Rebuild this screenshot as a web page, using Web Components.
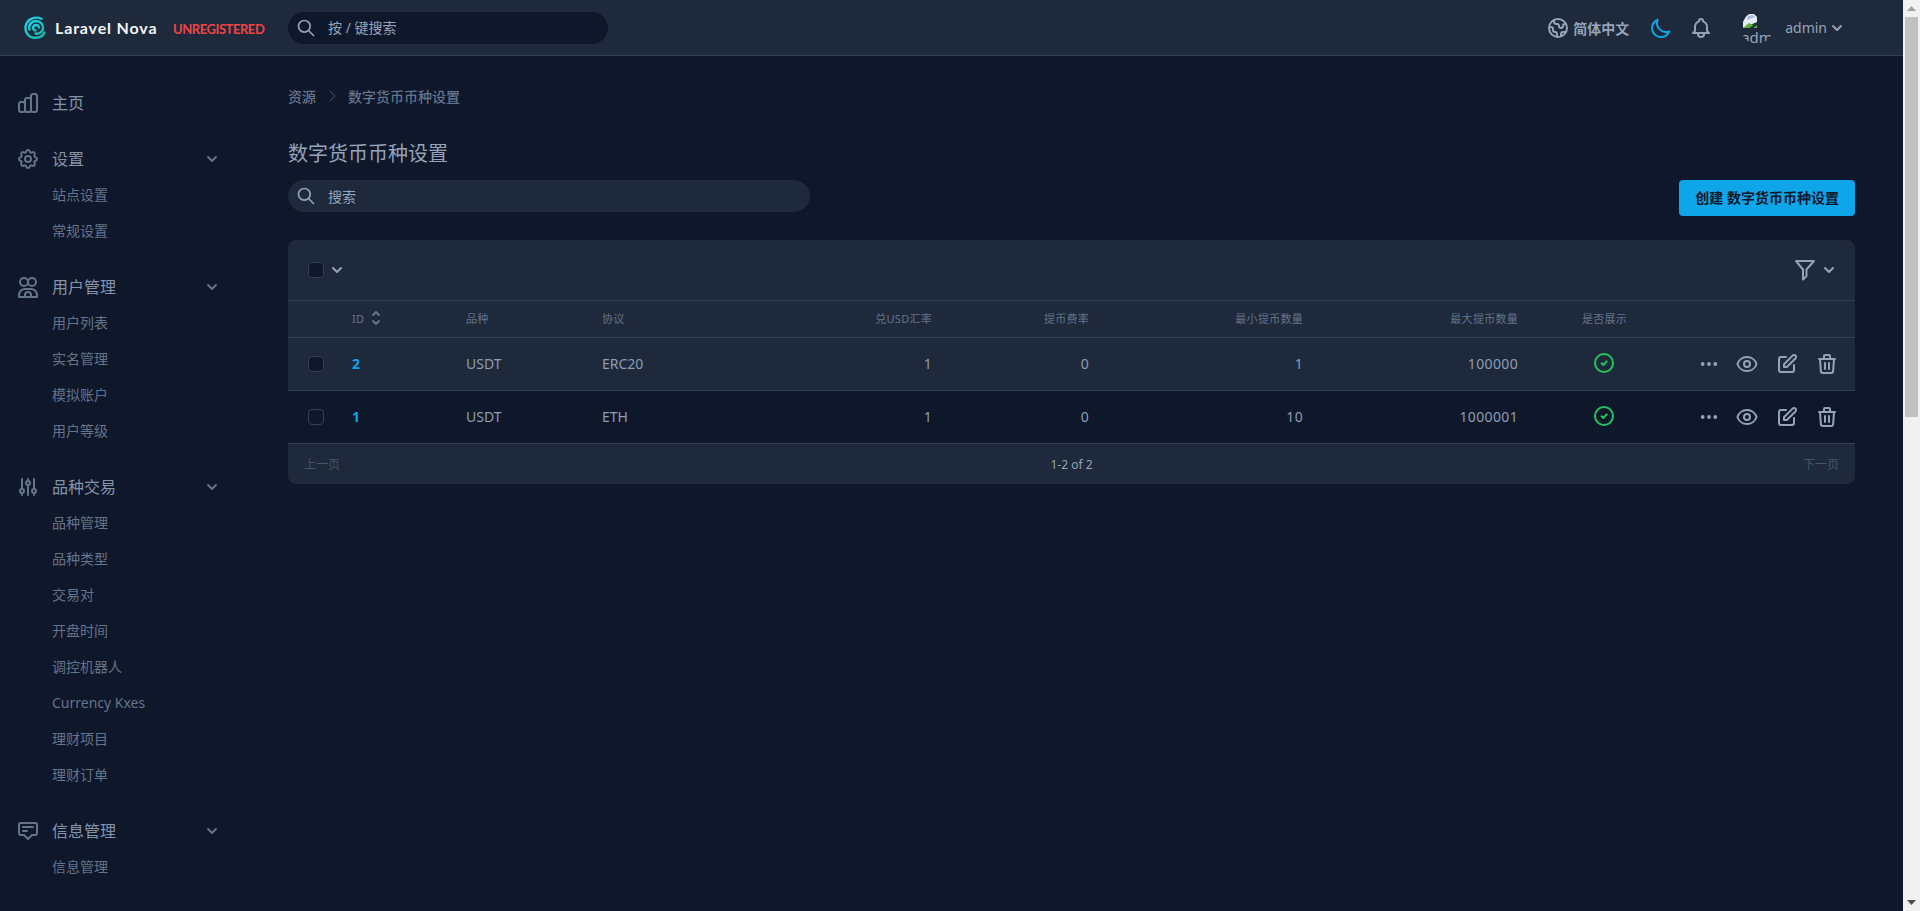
<!DOCTYPE html>
<html lang="zh-CN">
<head>
<meta charset="utf-8">
<title>数字货币币种设置</title>
<style>
  html, body { margin: 0; height: 911px; overflow: hidden; background: #0f172a; }
  body { font-family: "Noto Sans", "Noto Sans CJK SC", sans-serif; font-size: 14px; color: #94a3b8; }
</style>
</head>
<body>
<nova-app>
  <nova-header slot="header"></nova-header>
  <nova-sidebar slot="sidebar">
    <nav-group icon="chart" label="主页"></nav-group>
    <nav-group icon="cog" label="设置" open>
      <nav-item>站点设置</nav-item>
      <nav-item>常规设置</nav-item>
    </nav-group>
    <nav-group icon="users" label="用户管理" open>
      <nav-item>用户列表</nav-item>
      <nav-item>实名管理</nav-item>
      <nav-item>模拟账户</nav-item>
      <nav-item>用户等级</nav-item>
    </nav-group>
    <nav-group icon="sliders" label="品种交易" open>
      <nav-item>品种管理</nav-item>
      <nav-item>品种类型</nav-item>
      <nav-item>交易对</nav-item>
      <nav-item>开盘时间</nav-item>
      <nav-item>调控机器人</nav-item>
      <nav-item>Currency Kxes</nav-item>
      <nav-item>理财项目</nav-item>
      <nav-item>理财订单</nav-item>
    </nav-group>
    <nav-group icon="chat" label="信息管理" open>
      <nav-item>信息管理</nav-item>
    </nav-group>
  </nova-sidebar>
  <resource-page slot="main" crumb="资源" title-text="数字货币币种设置">
    <resource-table>
      <table-row kind="head">
        <row-cell></row-cell>
        <row-cell sort>ID</row-cell>
        <row-cell>品种</row-cell>
        <row-cell>协议</row-cell>
        <row-cell align="right">兑USD汇率</row-cell>
        <row-cell align="right">提币费率</row-cell>
        <row-cell align="right">最小提币数量</row-cell>
        <row-cell align="right">最大提币数量</row-cell>
        <row-cell align="center">是否展示</row-cell>
        <row-cell></row-cell>
      </table-row>
      <table-row kind="lit">
        <row-cell><row-check></row-check></row-cell>
        <row-cell link>2</row-cell>
        <row-cell>USDT</row-cell>
        <row-cell>ERC20</row-cell>
        <row-cell align="right" num>1</row-cell>
        <row-cell align="right" num>0</row-cell>
        <row-cell align="right" num>1</row-cell>
        <row-cell align="right" num>100000</row-cell>
        <row-cell align="center"><status-ok></status-ok></row-cell>
        <row-cell align="right"><row-actions></row-actions></row-cell>
      </table-row>
      <table-row>
        <row-cell><row-check></row-check></row-cell>
        <row-cell link>1</row-cell>
        <row-cell>USDT</row-cell>
        <row-cell>ETH</row-cell>
        <row-cell align="right" num>1</row-cell>
        <row-cell align="right" num>0</row-cell>
        <row-cell align="right" num>10</row-cell>
        <row-cell align="right" num>1000001</row-cell>
        <row-cell align="center"><status-ok></status-ok></row-cell>
        <row-cell align="right"><row-actions></row-actions></row-cell>
      </table-row>
    </resource-table>
  </resource-page>
  <fake-scrollbar slot="scroll"></fake-scrollbar>
</nova-app>

<script>
/* icon paths, 24 box unless said otherwise */
const ICONS = {
  chart: 'M9 19v-6a2 2 0 00-2-2H5a2 2 0 00-2 2v6a2 2 0 002 2h2a2 2 0 002-2zm0 0V9a2 2 0 012-2h2a2 2 0 012 2v10m-6 0a2 2 0 002 2h2a2 2 0 002-2m0 0V5a2 2 0 012-2h2a2 2 0 012 2v14a2 2 0 01-2 2h-2a2 2 0 01-2-2z',
  cog: 'M10.325 4.317c.426-1.756 2.924-1.756 3.35 0a1.724 1.724 0 002.573 1.066c1.543-.94 3.31.826 2.37 2.37a1.724 1.724 0 001.065 2.572c1.756.426 1.756 2.924 0 3.35a1.724 1.724 0 00-1.066 2.573c.94 1.543-.826 3.31-2.37 2.37a1.724 1.724 0 00-2.572 1.065c-.426 1.756-2.924 1.756-3.35 0a1.724 1.724 0 00-2.573-1.066c-1.543.94-3.31-.826-2.37-2.37a1.724 1.724 0 00-1.065-2.572c-1.756-.426-1.756-2.924 0-3.35a1.724 1.724 0 001.066-2.573c-.94-1.543.826-3.31 2.37-2.37.996.608 2.296.07 2.572-1.065zM15 12a3 3 0 11-6 0 3 3 0 016 0z',
  users: 'M12 7a4 4 0 11-8 0 4 4 0 018 0zM20 7a4 4 0 01-8 0 4 4 0 018 0zM3 22v-2a6 6 0 016-6h6a6 6 0 016 6v2zM9 22v-2a3 3 0 016 0v2',
  sliders: 'M12 6V4m0 2a2 2 0 100 4m0-4a2 2 0 110 4m-6 8a2 2 0 100-4m0 4a2 2 0 110-4m0 4v2m0-6V4m6 6v10m6-2a2 2 0 100-4m0 4a2 2 0 110-4m0 4v2m0-6V4',
  chat: 'M7 8h10M7 12h4m1 8l-4-4H5a2 2 0 01-2-2V6a2 2 0 012-2h14a2 2 0 012 2v8a2 2 0 01-2 2h-3l-4 4z',
  search: 'M21 21l-6-6m2-5a7 7 0 11-14 0 7 7 0 0114 0z',
  globe: 'M3.055 11H5a2 2 0 012 2v1a2 2 0 002 2 2 2 0 012 2v2.945M8 3.935V5.5A2.5 2.5 0 0010.5 8h.5a2 2 0 012 2 2 2 0 104 0 2 2 0 012-2h1.064M15 20.488V18a2 2 0 012-2h3.064M21 12a9 9 0 11-18 0 9 9 0 0118 0z',
  moon: 'M20.354 15.354A9 9 0 018.646 3.646 9.003 9.003 0 0012 21a9.003 9.003 0 008.354-5.646z',
  bell: 'M15 17h5l-1.405-1.405A2.032 2.032 0 0118 14.158V11a6.002 6.002 0 00-4-5.659V5a2 2 0 10-4 0v.341C7.67 6.165 6 8.388 6 11v3.159c0 .538-.214 1.055-.595 1.436L4 17h5m6 0v1a3 3 0 11-6 0v-1m6 0H9',
  filter: 'M3 3h18l-7.500 8.500V18l-3.500 3.500v-10z',
  eye: 'M15 12a3 3 0 11-6 0 3 3 0 016 0zM2.458 12C3.732 7.943 7.523 5 12 5c4.478 0 8.268 2.943 9.542 7-1.274 4.057-5.064 7-9.542 7-4.477 0-8.268-2.943-9.542-7z',
  edit: 'M11 5H6a2 2 0 00-2 2v11a2 2 0 002 2h11a2 2 0 002-2v-5m-1.414-9.414a2 2 0 112.828 2.828L11.828 15H9v-2.828l8.586-8.586z',
  trash: 'M19 7l-.867 12.142A2 2 0 0116.138 21H7.862a2 2 0 01-1.995-1.858L5 7m5 4v6m4-6v6m1-10V4a1 1 0 00-1-1h-4a1 1 0 00-1 1v3M4 7h16'
};
const CHEVRON = 'M5.293 7.293a1 1 0 011.414 0L10 10.586l3.293-3.293a1 1 0 111.414 1.414l-4 4a1 1 0 01-1.414 0l-4-4a1 1 0 010-1.414z';

function icon(name, size = 24) {
  return `<svg width="${size}" height="${size}" viewBox="0 0 24 24" fill="none" stroke="currentColor" stroke-width="2" stroke-linecap="round" stroke-linejoin="round"><path d="${ICONS[name]}"/></svg>`;
}
function chevron(size = 20) {
  return `<svg width="${size}" height="${size}" viewBox="0 0 20 20" fill="currentColor"><path fill-rule="evenodd" clip-rule="evenodd" d="${CHEVRON}"/></svg>`;
}

class ShadowBase extends HTMLElement {
  constructor() {
    super();
    this.attachShadow({mode: 'open'});
  }
  connectedCallback() {
    this.shadowRoot.innerHTML = this.render();
  }
}

class NovaApp extends ShadowBase {
  render() {
    return `<style>
      :host { display: flex; height: 911px; }
      .page { flex: 1; min-width: 0; display: flex; flex-direction: column; }
      .body { flex: 1; display: flex; min-height: 0; }
    </style>
    <div class="page">
      <slot name="header"></slot>
      <div class="body"><slot name="sidebar"></slot><slot name="main"></slot></div>
    </div>
    <slot name="scroll"></slot>`;
  }
}

class NovaHeader extends ShadowBase {
  render() {
    return `<style>
      :host { display: flex; align-items: center; height: 55px; background: #1e293b; border-bottom: 1px solid #334155; }
      .brand { width: 264px; margin-left: 24px; display: flex; align-items: center; flex: none; }
      .logo { display: block; margin-right: 8px; }
      .name { font: 700 16px/1 Lato, sans-serif; color: #f1f5f9; letter-spacing: .85px; width: 101px; white-space: nowrap; margin-top: 1px; }
      .reg { font: 700 13px/1 Lato, sans-serif; color: #ef4444; letter-spacing: -.45px; margin-left: 17px; margin-top: 3px; white-space: nowrap; }
      .search { width: 320px; height: 32px; border-radius: 16px; background: #0f172a; display: flex; align-items: center; padding-left: 8px; box-sizing: border-box; gap: 12px; }
      .search span { padding-bottom: 2px; }
      .right { margin-left: auto; margin-right: 56px; display: flex; align-items: center; height: 100%; }
      .lang { display: flex; align-items: center; gap: 3px; font-weight: 700; }
      svg { display: block; }
      .moon { color: #0ea5e9; margin-left: 20px; }
      .bell { margin-left: 16px; }
      .avatar { margin-left: 28px; width: 32px; height: 32px; border-radius: 50%; overflow: hidden; font-size: 15px; line-height: 16px; white-space: nowrap; }
      .avatar svg { margin: 1px 0 0 1px; }
      .user { margin-left: 12px; }
    </style>
    <div class="brand">
      <svg class="logo" width="23" height="23" viewBox="0 0 23 23" fill="none" stroke-linecap="round">
        <defs><linearGradient id="sw" x1="0" y1="0" x2="1" y2="1"><stop offset="0" stop-color="#22d3ee"/><stop offset="1" stop-color="#14b8a6"/></linearGradient></defs>
        <path stroke="url(#sw)" stroke-width="2.400" d="M17.500 2.800C11 -.2 3.500 3 1.800 9.500.2 16 5 22 11.500 21.800c4.300-.1 7.700-2 9-5.300"/>
        <path stroke="url(#sw)" stroke-width="2.400" d="M5.500 13.500C4.300 8.500 8 5 12 5c4.500 0 7.500 3.500 7 7.500-.5 3.500-4 5.800-7.500 5"/>
        <path stroke="url(#sw)" stroke-width="2.400" d="M15 11.500c-.3-1.800-1.800-2.700-3.300-2.500-1.800.2-2.900 1.900-2.500 3.500.3 1.200 1.400 2 2.500 1.900"/>
      </svg>
      <span class="name">Laravel Nova</span>
      <span class="reg">UNREGISTERED</span>
    </div>
    <div class="search">${icon('search', 20)}<span>按 / 键搜索</span></div>
    <div class="right">
      <div class="lang">${icon('globe')}<span>简体中文</span></div>
      <div class="moon">${icon('moon')}</div>
      <div class="bell">${icon('bell')}</div>
      <div class="avatar">
        <svg width="16" height="16" viewBox="0 0 16 16">
          <path fill="#e8ecf5" d="M5 1h7l3 3v5L1 15V9z"/>
          <path fill="#aab9e0" d="M6 3l5-1 2 2-8 3z"/>
          <path fill="#5fae3e" d="M1 15l6-5 4 2 4-2v5z"/>
          <path fill="#1e293b" d="M6 16l10-7v7z"/>
          <path fill="#5fae3e" d="M11 15l4-3v3z"/>
        </svg>admin
      </div>
      <span class="user">admin</span>
      <span class="chev">${chevron()}</span>
    </div>`;
  }
}

class NovaSidebar extends ShadowBase {
  render() {
    return `<style>
      :host { display: flex; flex-direction: column; width: 288px; flex: none; box-sizing: border-box; padding: 29px 0 0 16px; gap: 20px; overflow: hidden; }
    </style><slot></slot>`;
  }
}

class NavGroup extends ShadowBase {
  render() {
    const open = this.hasAttribute('open');
    return `<style>
      :host { display: block; color: #8494aa; }
      .head { display: flex; align-items: center; height: 36px; font-size: 16px; gap: 12px; width: 206px; }
      .head svg { display: block; flex: none; }
      .icon { color: #64748b; display: block; }
      .label { flex: 1; padding-bottom: 2px; }
      .chev { color: #64748b; }
    </style>
    <div class="head">
      <span class="icon">${icon(this.getAttribute('icon'))}</span>
      <span class="label">${this.getAttribute('label')}</span>
      ${open ? `<span class="chev">${chevron()}</span>` : ''}
    </div>
    <slot></slot>`;
  }
}

class NavItem extends ShadowBase {
  render() {
    return `<style>
      :host { display: flex; align-items: center; height: 36px; box-sizing: border-box; padding: 0 0 2px 36px; color: #64748b; font-size: 14px; }
    </style><slot></slot>`;
  }
}

class ResourcePage extends ShadowBase {
  render() {
    return `<style>
      :host { display: block; flex: 1; min-width: 0; padding: 31px 48px 0 0; box-sizing: border-box; }
      .crumbs { display: flex; align-items: center; height: 18px; color: #64748b; font-weight: 500; }
      .crumbs svg { margin: 0 8px; color: #475569; display: block; }
      h1 { margin: 35px 0 0; font-size: 20px; line-height: 28px; font-weight: 400; color: #94a3b8; }
      .bar { display: flex; justify-content: space-between; align-items: flex-start; margin: 12px 0 24px; }
      .search { width: 522px; height: 32px; border-radius: 16px; background: #1e293b; display: flex; align-items: center; padding-left: 8px; box-sizing: border-box; gap: 12px; }
      .search svg { display: block; }
      .create { height: 36px; box-sizing: border-box; padding: 0 16px 2px; border-radius: 4px; background: #0ea5e9; color: #0f172a; font-weight: 700; display: flex; align-items: center; }
    </style>
    <div class="crumbs"><span>${this.getAttribute('crumb')}</span>
      <svg width="16" height="16" viewBox="0 0 16 16" fill="none" stroke="currentColor" stroke-width="1"><path d="M6 3l5 5-5 5"/></svg>
      <span>${this.getAttribute('title-text')}</span></div>
    <h1>${this.getAttribute('title-text')}</h1>
    <div class="bar">
      <div class="search">${icon('search', 20)}<span>搜索</span></div>
      <div class="create">创建 ${this.getAttribute('title-text')}</div>
    </div>
    <slot></slot>`;
  }
}

class ResourceTable extends ShadowBase {
  render() {
    return `<style>
      :host { display: block; background: #1e293b; border-radius: 8px; overflow: hidden;
        --cols: 64px 114px 136px 136px 194px 157px 214px 215px 173px 1fr; }
      .tools { display: flex; align-items: center; height: 60px; padding: 0 16px 0 20px; border-bottom: 1px solid #334155; color: #94a3b8; }
      .tools svg { display: block; }
      .left { display: flex; align-items: center; gap: 3px; }
      .right { margin-left: auto; display: flex; align-items: center; }
      .right .c { margin-left: 2px; }
      .foot { display: flex; align-items: center; justify-content: space-between; height: 40px; padding: 0 16px; font-size: 12px; color: #475569; }
      .mid { color: #94a3b8; }
    </style>
    <div class="tools">
      <div class="left"><row-check></row-check>${chevron()}</div>
      <div class="right">${icon('filter')}<span class="c">${chevron()}</span></div>
    </div>
    <slot></slot>
    <div class="foot"><span>上一页</span><span class="mid">1-2 of 2</span><span>下一页</span></div>`;
  }
}

class TableRow extends ShadowBase {
  render() {
    const kind = this.getAttribute('kind');
    const bg = kind === 'lit' || kind === 'head' ? '#1e293b' : '#0f172a';
    const h = kind === 'head' ? 36 : 52;
    const extra = kind === 'head' ? 'font-size: 11px; letter-spacing: .275px; color: #64748b;' : 'color: #8c9db5;';
    return `<style>
      :host { display: grid; grid-template-columns: var(--cols); align-items: center; height: ${h}px; background: ${bg}; border-bottom: 1px solid #334155; ${extra} }
    </style><slot></slot>`;
  }
}

class RowCell extends ShadowBase {
  render() {
    const align = this.getAttribute('align') || 'left';
    const justify = {left: 'flex-start', right: 'flex-end', center: 'center'}[align];
    const link = this.hasAttribute('link');
    const sort = this.hasAttribute('sort');
    const num = this.hasAttribute('num') ? 'letter-spacing: .35px;' : '';
    return `<style>
      :host { display: flex; align-items: center; justify-content: ${justify}; ${link ? 'color: #0ea5e9; font-weight: 700;' : ''} ${num} min-width: 0; white-space: nowrap; padding-bottom: 2px; }
      svg { display: block; margin-left: 7px; color: #64748b; }
    </style><slot></slot>${sort ? `<svg width="10" height="16" viewBox="0 0 10 16" fill="none" stroke="currentColor" stroke-width="2" stroke-linecap="round" stroke-linejoin="round"><path d="M2 5l3-3 3 3M2 11l3 3 3-3"/></svg>` : ''}`;
  }
}

class RowCheck extends ShadowBase {
  render() {
    return `<style>
      :host { display: block; width: 16px; height: 16px; box-sizing: border-box; border: 1px solid #334155; border-radius: 4px; background: #0f172a; flex: none; }
      :host-context(table-row) { margin: 0 0 -2px 20px; }
    </style>`;
  }
}

class StatusOk extends ShadowBase {
  render() {
    return `<style>
      :host { display: block; color: #22c55e; margin-right: 2px; }
      svg { display: block; }
    </style>
    <svg width="24" height="24" viewBox="0 0 24 24" fill="none" stroke="currentColor" stroke-linecap="round" stroke-linejoin="round">
      <circle cx="12" cy="12" r="9" stroke-width="2"/><path d="M9.500 12.200l1.800 1.800 3.400-3.600" stroke-width="2"/>
    </svg>`;
  }
}

class RowActions extends ShadowBase {
  render() {
    return `<style>
      :host { display: flex; gap: 16px; padding-right: 16px; margin-bottom: -2px; color: #94a3b8; }
      svg { display: block; }
    </style>
    <svg width="24" height="24" viewBox="0 0 24 24" fill="currentColor"><circle cx="7.700" cy="12" r="1.900"/><circle cx="14" cy="12" r="1.900"/><circle cx="20.300" cy="12" r="1.900"/></svg>
    ${icon('eye')}${icon('edit')}${icon('trash')}`;
  }
}

class FakeScrollbar extends ShadowBase {
  render() {
    return `<style>
      :host { display: flex; flex-direction: column; width: 17px; flex: none; background: #f1f1f1; }
      .btn { height: 17px; display: flex; align-items: center; justify-content: center; }
      .thumb { height: 400px; margin: 0 2px; background: #c1c1c1; }
      .fill { flex: 1; }
      svg { display: block; }
    </style>
    <div class="btn"><svg width="9" height="5" viewBox="0 0 9 5" fill="#a3a3a3"><path d="M4.500 0L9 5H0z"/></svg></div>
    <div class="thumb"></div>
    <div class="fill"></div>
    <div class="btn"><svg width="9" height="5" viewBox="0 0 9 5" fill="#505050"><path d="M0 0h9L4.500 5z"/></svg></div>`;
  }
}

customElements.define('nova-app', NovaApp);
customElements.define('nova-header', NovaHeader);
customElements.define('nova-sidebar', NovaSidebar);
customElements.define('nav-group', NavGroup);
customElements.define('nav-item', NavItem);
customElements.define('resource-page', ResourcePage);
customElements.define('resource-table', ResourceTable);
customElements.define('table-row', TableRow);
customElements.define('row-cell', RowCell);
customElements.define('row-check', RowCheck);
customElements.define('status-ok', StatusOk);
customElements.define('row-actions', RowActions);
customElements.define('fake-scrollbar', FakeScrollbar);
</script>
</body>
</html>
